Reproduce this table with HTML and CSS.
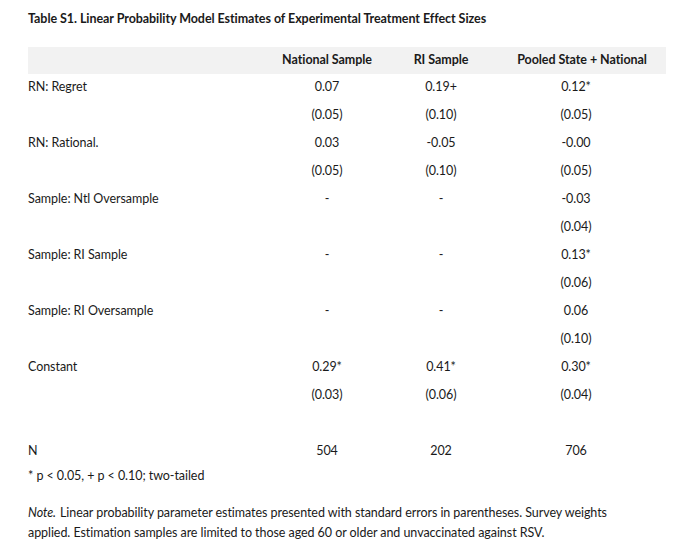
FILE: index.html
```html
<!DOCTYPE html>
<html lang="en">
<head>
<meta charset="utf-8">
<title>Table S1</title>
<link rel="stylesheet" href="styles.css">
</head>
<body>
<div class="page">
  <h1 class="title">Table S1. Linear Probability Model Estimates of Experimental Treatment Effect Sizes</h1>
  <table class="results">
    <colgroup>
      <col class="c-label">
      <col class="c-nat">
      <col class="c-ri">
      <col class="c-pool">
    </colgroup>
    <thead>
      <tr class="head">
        <th class="lbl"></th>
        <th>National Sample</th>
        <th>RI Sample</th>
        <th class="pool">Pooled State + National</th>
      </tr>
    </thead>
    <tbody>
      <tr><td class="lbl">RN: Regret</td><td>0.07</td><td>0.19+</td><td class="pool">0.12*</td></tr>
      <tr><td class="lbl"></td><td>(0.05)</td><td>(0.10)</td><td class="pool">(0.05)</td></tr>
      <tr><td class="lbl">RN: Rational.</td><td>0.03</td><td>-0.05</td><td class="pool">-0.00</td></tr>
      <tr><td class="lbl"></td><td>(0.05)</td><td>(0.10)</td><td class="pool">(0.05)</td></tr>
      <tr><td class="lbl">Sample: Ntl Oversample</td><td>-</td><td>-</td><td class="pool">-0.03</td></tr>
      <tr><td class="lbl"></td><td></td><td></td><td class="pool">(0.04)</td></tr>
      <tr><td class="lbl">Sample: RI Sample</td><td>-</td><td>-</td><td class="pool">0.13*</td></tr>
      <tr><td class="lbl"></td><td></td><td></td><td class="pool">(0.06)</td></tr>
      <tr><td class="lbl">Sample: RI Oversample</td><td>-</td><td>-</td><td class="pool">0.06</td></tr>
      <tr><td class="lbl"></td><td></td><td></td><td class="pool">(0.10)</td></tr>
      <tr><td class="lbl">Constant</td><td>0.29*</td><td>0.41*</td><td class="pool">0.30*</td></tr>
      <tr><td class="lbl"></td><td>(0.03)</td><td>(0.06)</td><td class="pool">(0.04)</td></tr>
      <tr><td class="lbl"></td><td></td><td></td><td class="pool"></td></tr>
      <tr><td class="lbl">N</td><td>504</td><td>202</td><td class="pool">706</td></tr>
    </tbody>
  </table>
  <p class="sig">* p &lt; 0.05, + p &lt; 0.10; two-tailed</p>
  <p class="note"><em class="note-lead">Note.</em>Linear probability parameter estimates presented with standard errors in parentheses. Survey weights applied. Estimation samples are limited to those aged 60 or older and unvaccinated against RSV.</p>
</div>
</body>
</html>
```

FILE: styles.css
```css
html, body {
  margin: 0;
  padding: 0;
  background: #ffffff;
}

body {
  font-family: "Lato", "Open Sans", sans-serif;
  font-size: 12.5px;
  letter-spacing: -0.06px;
  color: #1a1a1a;
}

.page {
  width: 638px;
  padding: 9px 0 0 28px;
}

.title {
  margin: 0 0 18px 0;
  font-size: 12.5px;
  font-weight: 700;
  line-height: 20px;
}

.results {
  width: 638px;
  border-collapse: collapse;
  table-layout: fixed;
}

.c-label { width: 242px; }
.c-nat { width: 114px; }
.c-ri { width: 114px; }
.c-pool { width: 168px; }

.results th,
.results td {
  padding: 5px 0 7px 0;
  height: 16px;
  line-height: 16px;
  text-align: center;
  vertical-align: top;
  white-space: nowrap;
}

.results .head th {
  background: #f2f2f2;
  font-weight: 700;
  padding: 5px 0 6px 0;
}

.results .lbl {
  text-align: left;
}

.results .pool {
  padding-right: 12px;
}

.sig {
  margin: 2px 0 0 0;
  line-height: 16px;
}

.note {
  margin: 19px 0 0 0;
  line-height: 20px;
  width: 600px;
}

.note-lead {
  display: inline-block;
  margin-right: 4px;
}
```
